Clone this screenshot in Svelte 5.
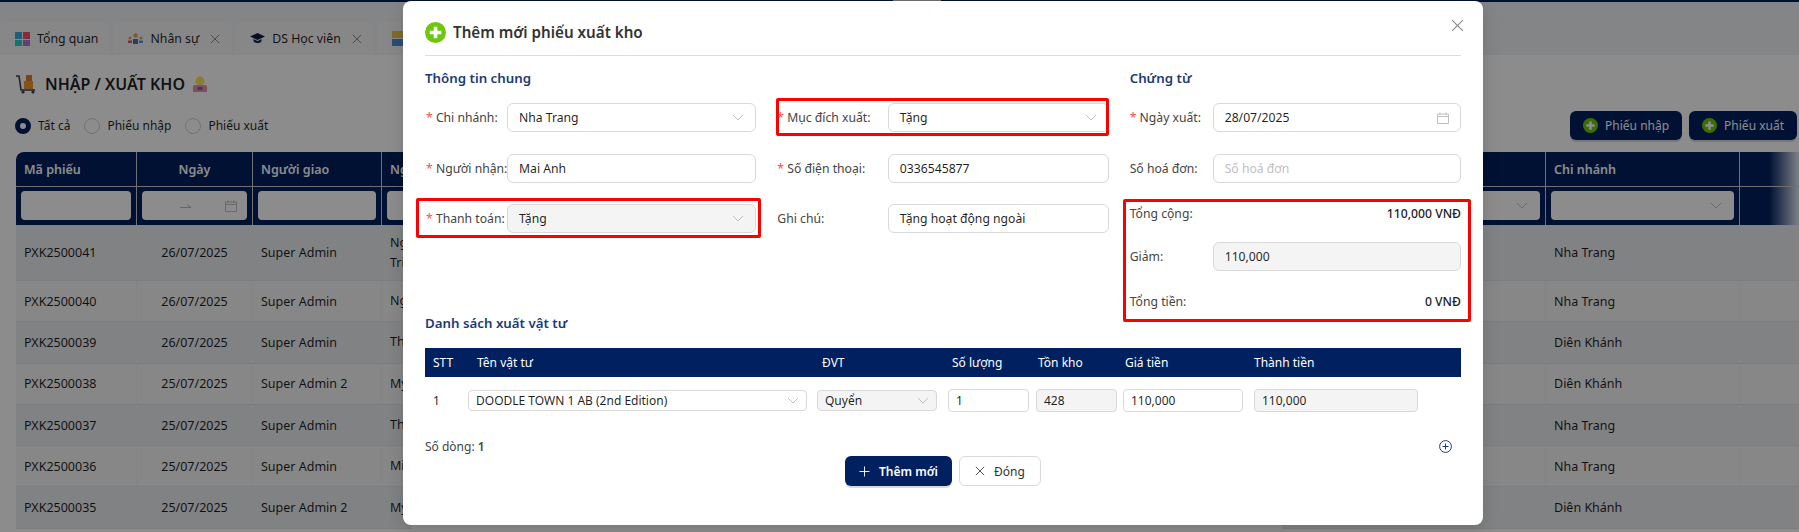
<script>
    const rows = [
        { id: "PXK2500041", date: "26/07/2025", by: "Super Admin", to: "Ngọc Trinh", branch: "Nha Trang", tall: true },
        { id: "PXK2500040", date: "26/07/2025", by: "Super Admin", to: "Ngọc", branch: "Nha Trang" },
        { id: "PXK2500039", date: "26/07/2025", by: "Super Admin", to: "Thảo", branch: "Diên Khánh" },
        { id: "PXK2500038", date: "25/07/2025", by: "Super Admin 2", to: "My", branch: "Diên Khánh" },
        { id: "PXK2500037", date: "25/07/2025", by: "Super Admin", to: "Thảo", branch: "Nha Trang" },
        { id: "PXK2500036", date: "25/07/2025", by: "Super Admin", to: "Minh", branch: "Nha Trang" },
        { id: "PXK2500035", date: "25/07/2025", by: "Super Admin 2", to: "My", branch: "Diên Khánh" },
    ];
</script>

{#snippet chevron()}
    <svg class="chev" viewBox="0 0 12 7" width="12" height="7"><path d="M1 1l5 5 5-5" fill="none" stroke="#bfbfbf" stroke-width="1"/></svg>
{/snippet}
{#snippet calendar()}
    <svg class="cal" viewBox="0 0 12 12" width="12" height="12"><path d="M.5 2h11v9.5H.5zM.5 4.5h11M3 .5V3M9 .5V3" fill="none" stroke="#bfbfbf" stroke-width="1"/></svg>
{/snippet}
{#snippet plusCircle()}
    <svg viewBox="0 0 20 20" width="100%" height="100%"><circle cx="10" cy="10" r="10" fill="#6cc70d"/><path d="M10 4.5v11M4.5 10h11" stroke="#fff" stroke-width="3.4"/></svg>
{/snippet}
{#snippet cross(size)}
    <svg viewBox="0 0 12 12" width={size} height={size}><path d="M1 1l10 10M11 1L1 11" fill="none" stroke="currentColor" stroke-width="1"/></svg>
{/snippet}

<div class="page">
    <div class="topbar"><span class="topbar-mark"></span></div>

    <div class="tabs">
        <div class="tab">
            <svg viewBox="0 0 15 14" width="15" height="14"><rect width="7" height="7" fill="#3fa9e0"/><rect x="8" width="7" height="7" fill="#f0506e"/><rect y="8" width="7" height="6" fill="#2ed1c6"/><rect x="8" y="8" width="7" height="6" fill="#a77bdc"/></svg>
            <span>Tổng quan</span>
        </div>
        <div class="tab">
            <svg viewBox="0 0 15 12" width="15" height="12"><circle cx="7.5" cy="2.5" r="2.2" fill="#e8a05c"/><path d="M5 11V6h5v5z" fill="#4d6fc4"/><circle cx="2" cy="5" r="1.6" fill="#e8a05c"/><path d="M0 10V7.5h4V10z" fill="#d9546a"/><circle cx="13" cy="5" r="1.6" fill="#e8a05c"/><path d="M11 10V7.5h4V10z" fill="#38a8d8"/></svg>
            <span>Nhân sự</span>
            <span class="tab-x">{@render cross(10)}</span>
        </div>
        <div class="tab">
            <svg viewBox="0 0 15 11" width="15" height="11"><path d="M7.5 0L15 3.5 7.5 7 0 3.5z" fill="#0d1c45"/><path d="M3.5 6v2.5C5 10.500 10 10.500 11.5 8.5V6L7.5 8z" fill="#1b2c5e"/></svg>
            <span>DS Học viên</span>
            <span class="tab-x">{@render cross(10)}</span>
        </div>
        <div class="tab">
            <svg viewBox="0 0 15 15" width="15" height="15"><rect width="15" height="7" fill="#e9c24e"/><rect y="8" width="15" height="7" fill="#4d8fd0"/></svg>
            <span>Kho</span>
        </div>
    </div>

    <div class="content">
        <div class="heading">
            <svg viewBox="0 0 20 20" width="20" height="20"><path d="M0 2h3l2 14h14" fill="none" stroke="#39424f" stroke-width="1.6"/><rect x="8" y="7" width="9" height="8" fill="#ef9a2e"/><rect x="10" y="1" width="6" height="6" fill="#e8792a"/><circle cx="7" cy="18" r="1.6" fill="#39424f"/><circle cx="17" cy="18" r="1.6" fill="#39424f"/></svg>
            <h1>NHẬP / XUẤT KHO</h1>
            <svg viewBox="0 0 14 16" width="14" height="16"><circle cx="7" cy="5" r="4.4" fill="#ffe25a"/><path d="M0 16V10.5Q0 9 2 9h10q2 0 2 1.500V16z" fill="#f08ca8"/><rect x="4.500" y="11" width="5" height="3" fill="#5b6fd0"/></svg>
        </div>

        <div class="toolbar">
            <div class="radios">
                <span class="radio on"></span><span class="radio-text">Tất cả</span>
                <span class="radio"></span><span class="radio-text">Phiếu nhập</span>
                <span class="radio"></span><span class="radio-text">Phiếu xuất</span>
            </div>
            <div class="actions">
                <button class="btn-page"><span class="btn-ic">{@render plusCircle()}</span>Phiếu nhập</button>
                <button class="btn-page"><span class="btn-ic">{@render plusCircle()}</span>Phiếu xuất</button>
            </div>
        </div>

        <div class="grid">
            <div class="th first">Mã phiếu</div>
            <div class="th center">Ngày</div>
            <div class="th">Người giao</div>
            <div class="th">Người nhận</div>
            <div class="th">Mục đích</div>
            <div class="th">Chi nhánh</div>
            <div class="th th-last"></div>

            <div class="tf"><span class="tf-box"></span></div>
            <div class="tf"><span class="tf-box tf-date">
                <svg viewBox="0 0 12 5" width="12" height="5"><path d="M0 4.500h11L7 1.500" fill="none" stroke="#bbb" stroke-width="1"/></svg>
                {@render calendar()}
            </span></div>
            <div class="tf"><span class="tf-box"></span></div>
            <div class="tf"><span class="tf-box"></span></div>
            <div class="tf"><span class="tf-box tf-sel">{@render chevron()}</span></div>
            <div class="tf"><span class="tf-box tf-sel">{@render chevron()}</span></div>
            <div class="tf th-last"></div>

            {#each rows as r, i}
                <div class="td" class:tall={r.tall} class:alt={i % 2 === 1}>{r.id}</div>
                <div class="td center" class:tall={r.tall} class:alt={i % 2 === 1}>{r.date}</div>
                <div class="td" class:tall={r.tall} class:alt={i % 2 === 1}>{r.by}</div>
                <div class="td wrap" class:tall={r.tall} class:alt={i % 2 === 1}>{r.to}</div>
                <div class="td" class:tall={r.tall} class:alt={i % 2 === 1}></div>
                <div class="td" class:tall={r.tall} class:alt={i % 2 === 1}>{r.branch}</div>
                <div class="td" class:tall={r.tall} class:alt={i % 2 === 1}></div>
            {/each}
        </div>
    </div>

    <div class="overlay">
        <div class="modal">
            <div class="modal-head">
                <span class="head-ic">{@render plusCircle()}</span>
                <h2>Thêm mới phiếu xuất kho</h2>
                <span class="close">{@render cross(13)}</span>
            </div>

            <div class="form">
                <div class="col">
                    <h3>Thông tin chung</h3>
                    <div class="field">
                        <label class="l1"><em>*</em> Chi nhánh:</label>
                        <div class="ctl sel">Nha Trang{@render chevron()}</div>
                    </div>
                    <div class="field">
                        <label class="l1"><em>*</em> Người nhận:</label>
                        <div class="ctl">Mai Anh</div>
                    </div>
                    <div class="field">
                        <label class="l1"><em>*</em> Thanh toán:</label>
                        <div class="ctl sel off">Tặng{@render chevron()}</div>
                    </div>
                </div>
                <div class="col">
                    <h3>&nbsp;</h3>
                    <div class="field">
                        <label class="l2"><em>*</em> Mục đích xuất:</label>
                        <div class="ctl sel">Tặng{@render chevron()}</div>
                    </div>
                    <div class="field">
                        <label class="l2"><em>*</em> Số điện thoại:</label>
                        <div class="ctl">0336545877</div>
                    </div>
                    <div class="field">
                        <label class="l2">Ghi chú:</label>
                        <div class="ctl">Tặng hoạt động ngoài</div>
                    </div>
                </div>
                <div class="col">
                    <h3>Chứng từ</h3>
                    <div class="field">
                        <label class="l3"><em>*</em> Ngày xuất:</label>
                        <div class="ctl sel">28/07/2025{@render calendar()}</div>
                    </div>
                    <div class="field">
                        <label class="l3">Số hoá đơn:</label>
                        <div class="ctl ph">Số hoá đơn</div>
                    </div>
                    <div class="total">
                        <div class="total-line"><span>Tổng cộng:</span><b>110,000 VNĐ</b></div>
                        <div class="field">
                            <label class="l3">Giảm:</label>
                            <div class="ctl off">110,000</div>
                        </div>
                        <div class="total-line last"><span>Tổng tiền:</span><b>0 VNĐ</b></div>
                    </div>
                </div>
            </div>

            <h3 class="list-title">Danh sách xuất vật tư</h3>
            <div class="items items-head">
                <div>STT</div>
                <div>Tên vật tư</div>
                <div>ĐVT</div>
                <div>Số lượng</div>
                <div>Tồn kho</div>
                <div>Giá tiền</div>
                <div>Thành tiền</div>
            </div>
            <div class="items items-row">
                <div class="stt">1</div>
                <div><span class="mini sel">DOODLE TOWN 1 AB (2nd Edition){@render chevron()}</span></div>
                <div><span class="mini sel off">Quyển{@render chevron()}</span></div>
                <div><span class="mini tall">1</span></div>
                <div><span class="mini tall off">428</span></div>
                <div><span class="mini tall">110,000</span></div>
                <div><span class="mini tall off">110,000</span></div>
            </div>

            <div class="count">
                <span>Số dòng: <b>1</b></span>
                <svg viewBox="0 0 13 13" width="13" height="13"><circle cx="6.500" cy="6.500" r="5.900" fill="none" stroke="#1d3a78" stroke-width="1"/><path d="M6.500 3.500v6M3.500 6.500h6" stroke="#1d3a78" stroke-width="1"/></svg>
            </div>

            <div class="modal-foot">
                <button class="btn-main"><svg viewBox="0 0 12 12" width="11" height="11"><path d="M6 .5v11M.5 6h11" stroke="#fff" stroke-width="1"/></svg>Thêm mới</button>
                <button class="btn-close">{@render cross(10)}Đóng</button>
            </div>

            <!-- red annotation frames from the original screenshot -->
            <span class="mark m1"></span>
            <span class="mark m2"></span>
            <span class="mark m3"></span>
        </div>
    </div>
</div>

<style>
    :global(body) {
        margin: 0;
    }
    .page {
        position: relative;
        width: 1799px;
        height: 532px;
        overflow: hidden;
        background: #eff3f4;
        font-family: "Noto Sans", "Open Sans", sans-serif;
        font-size: 12.5px;
        color: rgba(0, 0, 0, 0.88);
    }
    .topbar {
        height: 2px;
        background: #002060;
    }
    .topbar-mark {
        display: block;
        width: 48px;
        height: 1px;
        margin-left: 893px;
        background: #ccc;
    }

    /* Tabs */
    .tabs {
        display: flex;
        gap: 3px;
        height: 33px;
        margin-top: 20px;
    }
    .tab {
        display: flex;
        align-items: center;
        gap: 7px;
        padding: 0 12px 0 15px;
        background: #f6f6f8;
        border-radius: 6px 6px 0 0;
        font-size: 12.3px;
    }
    .tab-x {
        display: flex;
        margin-left: 4px;
        color: #777;
    }

    /* Page behind the dialog */
    .content {
        background: #fff;
        height: 477px;
        padding-left: 16px;
    }
    .heading {
        display: flex;
        align-items: center;
        gap: 8px;
        box-sizing: border-box;
        height: 56px;
        padding-top: 2px;
    }
    .heading h1 {
        margin: 0 0 0 1px;
        font-size: 16px;
        font-weight: 600;
    }
    .toolbar {
        display: flex;
        align-items: center;
        justify-content: space-between;
        height: 29px;
        margin-bottom: 12px;
        padding-right: 2px;
    }
    .radios {
        display: flex;
        align-items: center;
        margin-left: -1px;
        font-size: 12px;
    }
    .radio {
        width: 14px;
        height: 14px;
        border: 1px solid #d0d0d0;
        border-radius: 50%;
        background: #fff;
    }
    .radio.on {
        box-sizing: border-box;
        width: 16px;
        height: 16px;
        border: 5px solid #002060;
    }
    .radio-text {
        margin: 0 14px 0 7px;
    }
    .actions {
        display: flex;
        gap: 7px;
    }
    .btn-page {
        display: flex;
        align-items: center;
        gap: 7px;
        height: 29px;
        padding: 0 13px;
        border: none;
        border-radius: 6px;
        background: #002060;
        box-shadow: 0 2px 0 rgba(0, 0, 0, 0.15);
        color: #fff;
        font: inherit;
        font-size: 12px;
    }
    .btn-ic {
        display: block;
        width: 15px;
        height: 15px;
    }

    .grid {
        display: grid;
        grid-template-columns: 121px 116px 129px 900px 264px 194px 59px;
    }
    .th {
        display: flex;
        align-items: center;
        box-sizing: border-box;
        height: 35px;
        padding-left: 8px;
        background: #002060;
        border-right: 1px solid #ccc;
        border-bottom: 1px solid #ccc;
        color: #fff;
        font-weight: 600;
        font-size: 12.5px;
    }
    .th.first {
        border-radius: 8px 0 0 0;
    }
    .th.center {
        justify-content: center;
        padding-left: 0;
    }
    .th.th-last {
        border-right: none;
        background: linear-gradient(90deg, #002060 50%, #e4eaf6 100%);
    }
    .tf {
        box-sizing: border-box;
        height: 38px;
        padding: 4px 5px;
        background: #002060;
        border-right: 1px solid #ccc;
    }
    .tf.th-last {
        border-right: none;
        background: linear-gradient(90deg, #002060 50%, #e4eaf6 100%);
    }
    .tf-box {
        display: flex;
        align-items: center;
        box-sizing: border-box;
        height: 29px;
        padding: 0 12px;
        background: #fff;
        border-radius: 4px;
    }
    .tf-date {
        justify-content: flex-end;
        gap: 33px;
        padding-right: 10px;
    }
    .tf-sel {
        justify-content: flex-end;
    }
    .td {
        display: flex;
        align-items: center;
        box-sizing: border-box;
        height: 41.3px;
        padding: 0 8px;
        background: #ecedf1;
        border-right: 1px solid #eee;
        border-bottom: 1px solid #e4e4e4;
        font-size: 12.5px;
    }
    .td.alt {
        background: #f6f6f6;
    }
    .td.tall {
        height: 56px;
    }
    .td.center {
        justify-content: center;
    }
    .td.wrap {
        width: 30px;
        line-height: 20px;
    }

    /* Dialog */
    .overlay {
        position: absolute;
        inset: 0;
        padding: 1px 0 0 403px;
        background: rgba(0, 0, 0, 0.45);
    }
    .modal {
        position: relative;
        box-sizing: border-box;
        width: 1080px;
        height: 524px;
        padding: 0 22px;
        background: #fff;
        border-radius: 8px;
        box-shadow: 0 4px 16px rgba(0, 0, 0, 0.15);
    }
    .modal-head {
        display: flex;
        align-items: center;
        gap: 7px;
        box-sizing: border-box;
        height: 55px;
        padding-top: 8px;
        border-bottom: 1px solid #ddd;
    }
    .head-ic {
        display: block;
        width: 21px;
        height: 21px;
    }
    .modal-head h2 {
        margin: 0;
        font-size: 15.2px;
        font-weight: 600;
        color: #333;
    }
    .close {
        display: flex;
        margin-left: auto;
        margin-right: -3px;
        margin-top: -13px;
        color: #888;
    }
    .form {
        display: grid;
        grid-template-columns: repeat(3, 1fr);
        column-gap: 21px;
        margin-top: 12px;
    }
    .col {
        display: flex;
        flex-direction: column;
        gap: 21.5px;
    }
    h3 {
        height: 20px;
        margin: 0 0 -6.500px;
        font-size: 13.3px;
        font-weight: 600;
        line-height: 20px;
        color: #1d3a78;
    }
    .field {
        display: flex;
        align-items: center;
        height: 29px;
    }
    label {
        flex-shrink: 0;
        white-space: nowrap;
        font-size: 12.2px;
        color: #444;
    }
    label em {
        color: #ff4d4f;
        font-style: normal;
    }
    .l1 {
        width: 82px;
        padding-left: 1px;
        box-sizing: border-box;
    }
    .l2 {
        width: 110.500px;
    }
    .l3 {
        width: 83px;
    }
    .ctl {
        display: flex;
        align-items: center;
        justify-content: space-between;
        flex: 1;
        box-sizing: border-box;
        height: 29px;
        padding: 0 11px;
        border: 1px solid #d9d9d9;
        border-radius: 6px;
        background: #fff;
        font-size: 12.2px;
    }
    .ctl.off,
    .mini.off {
        background: #f4f4f4;
    }
    .ctl.ph {
        color: #bfbfbf;
    }
    .total {
        display: flex;
        flex-direction: column;
        gap: 18px;
    }
    .total-line {
        display: flex;
        justify-content: space-between;
        height: 20px;
        font-size: 12.2px;
        line-height: 20px;
        color: #444;
    }
    .total-line.last {
        margin-top: 3px;
    }
    .total-line b {
        font-weight: 500;
        color: #222;
    }
    .list-title {
        margin: 1px 0 15px;
    }

    .items {
        display: grid;
        grid-template-columns: 43px 345px 131px 87px 88px 129px 1fr;
    }
    .items-head {
        height: 29px;
        align-items: center;
        background: #002060;
        color: #fff;
        font-size: 12px;
    }
    .items-head div:nth-child(1) { padding-left: 8px; }
    .items-head div:nth-child(2) { padding-left: 9px; }
    .items-head div:nth-child(3) { padding-left: 9px; }
    .items-head div:nth-child(4) { padding-left: 8px; }
    .items-head div:nth-child(5) { padding-left: 7px; }
    .items-head div:nth-child(6) { padding-left: 6px; }
    .items-head div:nth-child(7) { padding-left: 6px; }
    .items-row {
        align-items: start;
        height: 59px;
        padding-top: 12px;
        box-sizing: border-box;
        font-size: 12px;
    }
    .stt {
        padding: 3px 0 0 8px;
    }
    .items-row div:nth-child(3) { padding: 0 7px 0 4px; }
    .items-row div:nth-child(2) { padding-right: 6px; }
    .items-row div:nth-child(4) { padding: 0 2px 0 4px; }
    .items-row div:nth-child(5) { padding: 0 2px 0 5px; }
    .items-row div:nth-child(6) { padding: 0 5px 0 4px; }
    .items-row div:nth-child(7) { padding: 0 43px 0 6px; }
    .mini {
        display: flex;
        align-items: center;
        justify-content: space-between;
        box-sizing: border-box;
        height: 21px;
        margin-top: 1px;
        padding: 0 7px;
        border: 1px solid #d9d9d9;
        border-radius: 4px;
        background: #fff;
    }
    .mini.tall {
        height: 23px;
        margin-top: 0;
    }
    .count {
        display: flex;
        align-items: center;
        justify-content: space-between;
        height: 20px;
        padding-right: 9px;
        font-size: 12px;
        color: #444;
    }
    .count b {
        font-weight: 600;
    }
    .modal-foot {
        display: flex;
        justify-content: center;
        gap: 7px;
    }
    .modal-foot button {
        display: flex;
        align-items: center;
        justify-content: center;
        gap: 9px;
        box-sizing: border-box;
        height: 30px;
        border-radius: 6px;
        font: inherit;
        font-size: 12px;
    }
    .btn-main {
        width: 107px;
        border: none;
        background: #002060;
        box-shadow: 0 2px 0 rgba(0, 0, 0, 0.15);
        color: #fff;
        font-weight: 600 !important;
    }
    .btn-close {
        width: 82px;
        border: 1px solid #d9d9d9;
        background: #fff;
        color: #333;
    }
    .mark {
        position: absolute;
        box-sizing: border-box;
        border: 3px solid #f00;
        border-radius: 2px;
    }
    .m1 {
        left: 373px;
        top: 97px;
        width: 333px;
        height: 38px;
    }
    .m2 {
        left: 13px;
        top: 197px;
        width: 345px;
        height: 40px;
    }
    .m3 {
        left: 720px;
        top: 198px;
        width: 348px;
        height: 123px;
    }
</style>
